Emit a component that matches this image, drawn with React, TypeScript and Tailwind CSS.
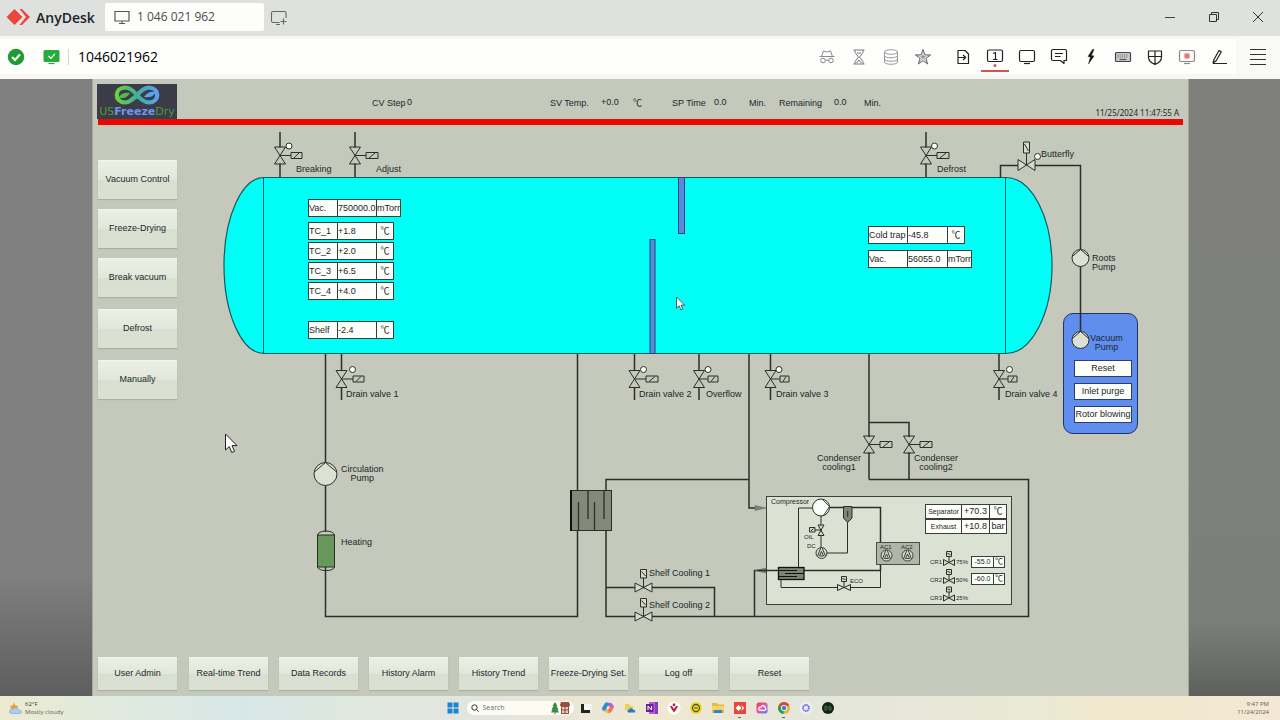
import type { ReactNode } from 'react';

/* The process canvas uses plant coordinates; its top-left corner is ORIGIN. */
const ORIGIN = { x: 200, y: 125 };

const LINE = '#2b2f28';

function Node({ x, y, children }: { x: number; y: number; children: ReactNode }) {
  return (
    <div className="absolute whitespace-nowrap" style={{ left: x - ORIGIN.x, top: y - ORIGIN.y }}>
      {children}
    </div>
  );
}

/* ---------- window chrome ---------- */

function TitleBar() {
  return (
    <header className="flex h-9 shrink-0 items-center bg-[#dfe1de] pb-0.5 pl-1.5 text-[#4a4c4b]">
      <svg className="h-6 w-6" viewBox="0 0 24 24" aria-hidden="true">
        <path d="M8.500 4L16.500 12L8.500 20L0.500 12Z" fill="#e8473c" />
        <path d="M13.500 4L16 4L24 12L16 20L13.500 20L20 12Z" fill="#e8473c" />
      </svg>
      <span className="ml-1.5 w-[63px] text-[14px] font-semibold text-[#1b2429]">AnyDesk</span>
      <button className="ml-1.5 flex h-7 w-[159px] items-center gap-1.5 rounded-xs bg-[#fdfefc] pl-2 text-[12px]">
        <svg className="h-4 w-[18px]" viewBox="0 0 18 16" fill="none" stroke="#555" strokeWidth="1.2" aria-hidden="true">
          <path d="M2 2.500H16V12H2ZM9 12V14.500M6 14.500H12" />
        </svg>
        1 046 021 962
      </button>
      <button className="mt-0.5 ml-1.5" aria-label="New session">
        <svg className="h-[18px] w-[18px]" viewBox="0 0 18 18" fill="none" stroke="#666" strokeWidth="1.1" aria-hidden="true">
          <path d="M9.500 13.500H3C2 13.500 1.500 13 1.500 12V4C1.500 3 2 2.500 3 2.500H14.500C15.500 2.500 16 3 16 4V9M6 15.500H10M13.500 9.500V15.500M10.500 12.500H16.500" />
        </svg>
      </button>
      <div className="ml-auto flex h-full">
        <button className="flex w-11 items-center justify-center" aria-label="Minimize">
          <svg className="h-3 w-3" viewBox="0 0 12 12" stroke="#444" aria-hidden="true"><path d="M1 6.500H11" /></svg>
        </button>
        <button className="flex w-11 items-center justify-center" aria-label="Restore">
          <svg className="h-3 w-3" viewBox="0 0 12 12" fill="none" stroke="#333" aria-hidden="true">
            <path d="M1.500 3.500H8.500V10.500H1.500ZM3.500 3.500V1.500H10.500V8.500H8.500" />
          </svg>
        </button>
        <button className="flex w-11 items-center justify-center" aria-label="Close">
          <svg className="h-3 w-3" viewBox="0 0 12 12" stroke="#333" aria-hidden="true"><path d="M1 1L11 11M11 1L1 11" /></svg>
        </button>
      </div>
    </header>
  );
}

function Tool({ label, active, children }: { label: string; active?: boolean; children: ReactNode }) {
  return (
    <button
      className={
        active
          ? 'relative flex h-full w-8 items-center justify-center after:absolute after:bottom-0.5 after:h-0.5 after:w-7 after:bg-[#d9534c]'
          : 'flex h-full w-8 items-center justify-center'
      }
      aria-label={label}
    >
      <svg
        className="h-[18px] w-[18px]"
        viewBox="0 0 18 18"
        fill="none"
        stroke="#222"
        strokeWidth="1.2"
        strokeLinejoin="round"
        overflow="visible"
        aria-hidden="true"
      >
        {children}
      </svg>
    </button>
  );
}

function Toolbar() {
  return (
    <nav className="flex h-[43px] shrink-0 items-center border-t-[3px] border-b-[5px] border-[#f7f8f5] bg-[#fefefd] text-black">
      <div className="flex w-[31px] justify-center">
        <svg className="h-[18px] w-[18px]" viewBox="0 0 18 18" aria-hidden="true">
          <circle cx="9" cy="9" r="8.200" fill="#1e9b35" />
          <path d="M5 9L8 12L13 6.500" fill="none" stroke="#fff" strokeWidth="2.200" />
        </svg>
      </div>
      <svg className="ml-3 h-4 w-[17px]" viewBox="0 0 17 16" aria-hidden="true">
        <rect x="0.500" y="1" width="16" height="12" rx="1.500" fill="#27ab3a" />
        <path d="M5.500 14.500H11.500" stroke="#27ab3a" strokeWidth="1.200" />
        <path d="M5.500 7L7.800 9.300L12 4.800" fill="none" stroke="#fff" strokeWidth="1.200" />
      </svg>
      <span className="ml-2 h-4 w-px bg-[#d3d3d3]" />
      <span className="ml-[9px] text-[14px]">1046021962</span>

      <div className="ml-auto flex h-full gap-2">
        <div className="flex h-full">
          <Tool label="Incognito">
            <g stroke="#888" strokeWidth="1">
              <path d="M1.500 8.500H16.500M3.500 8.500L5.500 3L9 4L12.500 3L14.500 8.500M7.500 12.500Q9 11.500 10.500 12.500" />
              <circle cx="5" cy="12.500" r="2.300" />
              <circle cx="13" cy="12.500" r="2.300" />
            </g>
          </Tool>
          <Tool label="Session time">
            <path stroke="#777" strokeWidth="1" d="M3.500 2H14.500M3.500 16H14.500M5 2V4.500L8.500 9L5 13.500V16M13 2V4.500L9.500 9L13 13.500V16M6.500 15L9 12L11.500 15M7 5H11" />
          </Tool>
          <Tool label="Storage">
            <g stroke="#999" strokeWidth="1">
              <ellipse cx="9" cy="4" rx="6.500" ry="2.300" />
              <path d="M2.500 4V14C2.500 17 15.500 17 15.500 14V4M2.500 7.500C2.500 10.500 15.500 10.500 15.500 7.500M2.500 11C2.500 14 15.500 14 15.500 11" />
            </g>
          </Tool>
          <Tool label="Favorite">
            <path stroke="#555" strokeWidth="0.900" d="M9 1.500L10.900 6.800L16.500 7L12 10.400L13.700 16L9 12.700L4.300 16L6 10.400L1.500 7L7.100 6.800Z" />
            <path stroke="#777" strokeWidth="0.600" d="M9 1.500V12.700M9 9L16.500 7M9 9L13.700 16M9 9L4.300 16M9 9L1.500 7M7.100 6.800L12 10.400M10.900 6.800L6 10.400" />
          </Tool>
        </div>
        <div className="mr-px flex h-full">
          <Tool label="File transfer">
            <path d="M4 2.500H11L14.500 6V15.500H4ZM4.500 9.500H11.500M9 7L11.700 9.500L9 12" />
          </Tool>
          <Tool label="Monitor 1" active>
            <rect x="1.500" y="2" width="15" height="11.500" rx="1.500" />
            <path d="M7 5.500L9.500 4.500V11.500M7 11.500H11.500" />
            <circle cx="9" cy="17.500" r="0.900" fill="#d9534c" stroke="#d9534c" />
          </Tool>
          <Tool label="Display">
            <rect x="1.500" y="2.500" width="15" height="11" rx="1.500" />
            <path d="M6 15.500H12" />
          </Tool>
          <Tool label="Chat">
            <path d="M3 1.500H15Q16.500 1.500 16.500 3V12.500H14V15.500L10.500 12.500H3Q1.500 12.500 1.500 11V3Q1.500 1.500 3 1.500ZM5 5.500H13M5 8.500H10.500" />
          </Tool>
          <Tool label="Actions">
            <path d="M10.500 1.500L6 8.500L8.500 9L6.500 16L12 8L9.300 7.500L12 1.500Z" fill="#111" strokeWidth="0.500" />
          </Tool>
          <Tool label="Keyboard">
            <rect x="1.500" y="4.500" width="15" height="9" rx="1" fill="#ccc" stroke="#444" />
            <path d="M3.500 7H14.500M3.500 9H14.500" stroke="#555" strokeWidth="1" strokeDasharray="1 1.200" />
            <path d="M5.500 11.500H12.500" stroke="#555" />
          </Tool>
          <Tool label="Permissions">
            <path d="M2.500 3H15.500V9Q15.500 14 9 16.500Q2.500 14 2.500 9ZM9 3V16M2.500 8.500H15.500" />
          </Tool>
          <Tool label="Record session">
            <rect x="1.500" y="2.500" width="15" height="11" rx="1.500" stroke="#888" />
            <path d="M6 15.500H12" stroke="#888" />
            <circle cx="9" cy="8" r="2.700" fill="#e8706c" stroke="#f0a8a4" />
          </Tool>
          <Tool label="Whiteboard">
            <path d="M3 15L4 11.500L9 2.500L11.300 3.800L6.200 12.800ZM3 15.500H17" />
          </Tool>
        </div>
      </div>
      <button className="flex h-full w-11 items-center justify-center bg-[#f9f9f7]" aria-label="Menu">
        <svg className="h-[18px] w-4" viewBox="0 0 16 18" stroke="#333" strokeWidth="1.200" aria-hidden="true">
          <path d="M0 1.500H16M0 6.500H16M0 11.500H16M0 16.500H16" />
        </svg>
      </button>
    </nav>
  );
}

/* ---------- operator screen ---------- */

function Logo() {
  return (
    <div className="flex h-[35px] w-20 flex-col items-center bg-[#3b3c48]">
      <svg className="h-[22px] w-12" viewBox="0 0 48 22" fill="none" aria-hidden="true">
        <defs>
          <linearGradient id="loop" x1="0" x2="1">
            <stop offset="0" stopColor="#6fd03a" />
            <stop offset="0.500" stopColor="#3fae9c" />
            <stop offset="1" stopColor="#5aa2f2" />
          </linearGradient>
        </defs>
        <path
          d="M24 11C19 5 16 3.500 12 3.500C1 4 1 18 12 18.500C22 18.500 26 3.500 36 3.500C47 4 47 18 36 18.500C32 18.500 29 17 24 11Z"
          stroke="url(#loop)"
          strokeWidth="4.200"
        />
        <path d="M5 14C8 9 12 8 17 9C14 14 9 15 5 14Z" fill="#55b94a" />
        <path d="M43 8C40 13 36 14 31 13C34 8 39 7 43 8Z" fill="#5aa2f2" />
      </svg>
      <span className="font-['DejaVu_Sans',sans-serif] text-[11px] leading-[12px] text-[#4f9a35]">
        US<b className="text-[#6f96ee]">Freeze</b>Dry
      </span>
    </div>
  );
}

function StatusHeader() {
  return (
    <div className="flex h-10 items-end pl-1">
      <Logo />
      <div className="ml-[195px] grid grid-cols-[35px_143px_51px_32px_39px_42px_35px_30px_55px_30px_auto] self-center pt-[7px] leading-[10px] whitespace-nowrap">
        <span>CV Step</span>
        <output className="-mt-px">0</output>
        <span>SV Temp.</span>
        <output className="-mt-px">+0.0</output>
        <span>℃</span>
        <span>SP Time</span>
        <output className="-mt-px">0.0</output>
        <span>Min.</span>
        <span>Remaining</span>
        <output className="-mt-px">0.0</output>
        <span>Min.</span>
      </div>
      <time className="mr-[9px] ml-auto pb-px font-['Noto_Sans',sans-serif] text-[8px] leading-[11px]">11/25/2024 11:47:55 A</time>
    </div>
  );
}

function PanelButton({ children, tall }: { children: ReactNode; tall?: boolean }) {
  return (
    <button
      className={
        (tall ? 'h-[39px]' : 'h-[33px]') +
        ' w-[79px] shrink-0 border-t border-[#f2f5ee] bg-linear-[180deg,#ebefe5_0%,#e2e7db_49%,#d9dfd1_51%,#dbe1d2_100%] text-center shadow-[0_1px_1px_#a9afa2]'
      }
    >
      {children}
    </button>
  );
}

/* Two-way valve on a vertical pipe, actuator to the right. */
function Valve({ x, y, top, bottom, box, dot }: { x: number; y: number; top: number; bottom: number; box: [number, number]; dot?: number }) {
  return (
    <g fill="none" stroke={LINE} strokeWidth="1">
      <path d={`M${x} ${top}V${y - 8}M${x} ${y + 8}V${bottom}`} strokeWidth="1.500" />
      <path d={`M${x - 5.5} ${y - 8.5}H${x + 5.5}L${x - 5.5} ${y + 8.5}H${x + 5.5}ZM${x} ${y}H${box[0]}`} />
      <path d={`M${box[0]} ${y - 3}H${box[1]}V${y + 3}H${box[0]}ZM${box[0] + 3} ${y + 2.5}L${box[1] - 3} ${y - 2.5}`} />
      {dot !== undefined && <circle cx={dot} cy={y - 9.5} r="3" fill="#fdfdfb" />}
    </g>
  );
}

/* Two-way valve on a horizontal pipe, actuator above. */
function FlatValve({ x, y, w, h, stem, box }: { x: number; y: number; w: number; h: number; stem: number; box: [number, number] }) {
  return (
    <g fill="#d5dacb" stroke={LINE} strokeWidth="1">
      <path d={`M${x - w} ${y - h}V${y + h}L${x + w} ${y - h}V${y + h}Z`} />
      <path d={`M${x} ${y}V${y - stem}`} />
      <path d={`M${x - box[0]} ${y - stem}H${x + box[0]}V${y - stem - box[1]}H${x - box[0]}ZM${x - box[0] + 1} ${y - stem - box[1] + 2}L${x + box[0] - 1} ${y - stem - 2}`} />
    </g>
  );
}

function Pump({ x, y, r }: { x: number; y: number; r: number }) {
  const k = r * 0.94;
  return (
    <g stroke={LINE} strokeWidth="1" fill="#dce1d3">
      <circle cx={x} cy={y} r={r} />
      <path d={`M${x - k} ${y - r * 0.2}L${x} ${y - r}L${x + k} ${y - r * 0.2}`} fill="none" />
    </g>
  );
}

function Fan({ x, y }: { x: number; y: number }) {
  return (
    <g fill="none" stroke={LINE} strokeWidth="0.900">
      <circle cx={x} cy={y} r="5.500" fill="#d5dacb" />
      <path d={`M${x - 4} ${y + 3.5}L${x - 0.8} ${y - 5}M${x + 4} ${y + 3.5}L${x + 0.8} ${y - 5}M${x - 2} ${y + 3}L${x} ${y - 1.5}L${x + 2} ${y + 3}Z`} />
    </g>
  );
}

function Pointer({ x, y, s }: { x: number; y: number; s: number }) {
  return (
    <path
      transform={`translate(${x} ${y}) scale(${s})`}
      d="M0 0V16L3.800 12.600L6.300 18.500L9 17.300L6.500 11.600H11.500Z"
      fill="#fff"
      stroke="#222"
      strokeWidth="1"
    />
  );
}

function Drawing() {
  return (
    <svg
      className="pointer-events-none absolute top-0 left-0 h-[525px] w-[980px] overflow-visible"
      viewBox="200 125 980 525"
      fill="none"
      aria-hidden="true"
    >
      {/* vessel */}
      <path d="M264 177.500H1006A46 88 0 0 1 1006 353.500H264A40 88 0 0 1 264 177.500Z" fill="#00fff6" stroke="#12595c" strokeWidth="1.200" />
      <path d="M263.500 178V353M1005.500 178V353" stroke="#0d5a5c" />
      <rect x="678.500" y="177.500" width="6" height="56" fill="#5a8ade" stroke="#22457c" />
      <rect x="650" y="239.500" width="5" height="114" fill="#5a8ade" stroke="#22457c" />

      {/* pipes */}
      <g stroke={LINE} strokeWidth="1.500">
        <path d="M325.500 354V463M325.500 485V532M325.500 567V616.500H577.500V530M577.500 354V491" />
        <path d="M606 491V479.500H749M749 354V508H757M606 530V616.500H1028.500V479.500H869M606 587.500H714.500V616.500M754.500 616.500V570.500H757" />
        <path d="M869 354V437M869 422.500H909V437M869 453V479.500M909 453V479.500" />
        <path d="M1000.500 178V165.500H1019M1034 165.500H1080.500V332" />
      </g>
      <path d="M755 505.500L766 508L755 510.500ZM766 568L755 570.500L766 573Z" fill="#7d8377" stroke="#656a60" strokeWidth="0.500" />

      <Valve x={280} y={155.500} top={132} bottom={177} box={[291, 302]} dot={289} />
      <Valve x={355} y={155.500} top={132} bottom={177} box={[366, 378]} />
      <Valve x={926} y={155.500} top={132} bottom={177} box={[937, 949]} dot={934.500} />
      <Valve x={341.500} y={379} top={354} bottom={400} box={[353, 364]} dot={352.500} />
      <Valve x={634.500} y={379} top={354} bottom={400} box={[646, 658]} dot={643.500} />
      <Valve x={699} y={379} top={354} bottom={400} box={[708, 718]} dot={708} />
      <Valve x={770.500} y={379} top={354} bottom={400} box={[780, 789]} dot={779} />
      <Valve x={999} y={379} top={354} bottom={400} box={[1008, 1017]} dot={1009.500} />
      <Valve x={869} y={444.500} top={436} bottom={454} box={[880, 892]} />
      <Valve x={909} y={444.500} top={436} bottom={454} box={[920, 932]} />
      <FlatValve x={1026.500} y={165} w={8.500} h={5.500} stem={12} box={[3, 11]} />
      <circle cx="1037.500" cy="156.500" r="3" fill="#fdfdfb" stroke={LINE} />
      <FlatValve x={643.500} y={587.500} w={8.500} h={4.500} stem={9.500} box={[3, 8.500]} />
      <FlatValve x={643.500} y={616.500} w={8.500} h={4.500} stem={9.500} box={[3, 8.500]} />

      <Pump x={325.500} y={474} r={11.500} />
      <Pump x={1080.500} y={258} r={8.500} />
      <Pump x={1080.500} y={340} r={8.500} />

      {/* heater */}
      <path d="M317.500 535.500C317.500 529.500 334.500 529.500 334.500 535.500M317.500 566.500C317.500 572 334.500 572 334.500 566.500" stroke={LINE} />
      <rect x="317.500" y="535" width="17" height="32" fill="#68985e" stroke={LINE} />

      {/* plate exchanger */}
      <rect x="570.500" y="490.500" width="41" height="40" fill="#838a7a" stroke={LINE} />
      <path d="M571 490V531" stroke="#111" strokeWidth="2" />
      <path d="M578.500 502V530M588 491V519M594.500 502V530M604 491V519" stroke="#2c302a" strokeWidth="1.300" />

      {/* compressor skid */}
      <rect x="766.500" y="496.500" width="245" height="108" fill="#dce2d3" stroke="#3d423a" />
      <g stroke={LINE} strokeWidth="1">
        <path d="M813 508H798.500V568M821 516V548M847.500 522V553H827M781 580V587.500H838M850 587.500H880.500V565" />
        <path d="M829 507.500H880.500V543M757 570.500H880.500V565" strokeWidth="1.500" />
      </g>
      <circle cx="821" cy="507.500" r="8.500" fill="#fdfefb" stroke={LINE} />
      <path d="M823 500L829.500 506.500L823.500 515.500" stroke={LINE} strokeWidth="0.900" />
      <path d="M843.500 506.500H852V518L847.700 522.500L843.500 518Z" fill="#7f8578" stroke={LINE} />
      <path d="M847.700 511V517" stroke={LINE} />
      <path d="M818 525H824L818 535.500H824ZM821 530H815M809.500 527.500H815V532H809.500ZM811 531L813.500 528.500" stroke={LINE} fill="#d5dacb" />
      <Fan x={821.500} y={553} />
      <rect x="876.500" y="542.500" width="43" height="22" fill="#b0b5a9" stroke="#4a4f46" />
      <Fan x={886.500} y={555.500} />
      <Fan x={907.500} y={555.500} />
      <rect x="778.500" y="567.500" width="25.500" height="12" fill="#7e8576" stroke="#111" strokeWidth="1.300" />
      <path d="M779 570.500H797M785 573.500H804M779 576.500H797" stroke="#111" />
      <FlatValve x={844} y={587.500} w={6.500} h={3} stem={6} box={[2.500, 5]} />
      <FlatValve x={949} y={562.500} w={5.500} h={3} stem={6} box={[2.500, 5]} />
      <FlatValve x={949} y={580.500} w={5.500} h={3} stem={6} box={[2.500, 5]} />
      <FlatValve x={949} y={598} w={5.500} h={3} stem={6} box={[2.500, 5]} />
    </svg>
  );
}

type Mark = { x: number; y: number; text: string };

const labels: Mark[] = [
  { x: 296, y: 169, text: 'Breaking' },
  { x: 376, y: 169, text: 'Adjust' },
  { x: 937, y: 169, text: 'Defrost' },
  { x: 1041, y: 154, text: 'Butterfly' },
  { x: 346, y: 394, text: 'Drain valve 1' },
  { x: 639, y: 394, text: 'Drain valve 2' },
  { x: 706, y: 394, text: 'Overflow' },
  { x: 776, y: 394, text: 'Drain valve 3' },
  { x: 1005, y: 394, text: 'Drain valve 4' },
  { x: 341, y: 469, text: 'Circulation\nPump' },
  { x: 341, y: 542, text: 'Heating' },
  { x: 649, y: 573, text: 'Shelf Cooling 1' },
  { x: 649, y: 605, text: 'Shelf Cooling 2' },
  { x: 817, y: 458, text: 'Condenser\ncooling1' },
  { x: 914, y: 458, text: 'Condenser\ncooling2' },
  { x: 1092, y: 258, text: 'Roots\nPump' },
];

const smallLabels: Mark[] = [
  { x: 771, y: 502, text: 'Compressor' },
];

const tinyLabels: Mark[] = [
  { x: 804, y: 537, text: 'OIL' },
  { x: 807, y: 546, text: 'DC' },
  { x: 880, y: 547, text: 'AC1' },
  { x: 901, y: 547, text: 'AC2' },
  { x: 850, y: 581, text: 'ECO' },
  { x: 930, y: 562, text: 'CR1' },
  { x: 930, y: 580, text: 'CR2' },
  { x: 930, y: 598, text: 'CR3' },
  { x: 956, y: 562, text: '75%' },
  { x: 956, y: 580, text: '50%' },
  { x: 956, y: 598, text: '25%' },
];

function Reading({ name, value, unit, wide, far }: { name: string; value: string; unit: string; wide?: boolean; far?: boolean }) {
  return (
    <div className="flex h-[18px] w-max divide-x divide-[#25403f] border border-[#25403f] bg-[#fdfefa] leading-4">
      <span className={far ? 'w-[39px]' : 'w-[29px]'}>{name}</span>
      <output className={far ? 'w-10' : 'w-[39px]'}>{value}</output>
      <span className={wide ? 'w-[23px]' : 'w-4 text-center'}>{unit}</span>
    </div>
  );
}

function SkidReading({ name, value, unit }: { name: string; value: string; unit: string }) {
  return (
    <div className="flex h-[15px] divide-x divide-[#3a3d38] border border-[#3a3d38] bg-[#fdfefa] leading-[13px]">
      <span className="w-9 text-center text-[7px]">{name}</span>
      <output className="w-7 text-center">{value}</output>
      <span className="w-4 text-center">{unit}</span>
    </div>
  );
}

function SetPoint({ value }: { value: string }) {
  return (
    <div className="flex h-3 divide-x divide-[#3a3d38] border border-[#3a3d38] bg-[#fdfefa] leading-[10px]">
      <output className="w-[22px] text-center text-[7px]">{value}</output>
      <span className="w-2.5 text-center text-[8px]">℃</span>
    </div>
  );
}

function Process() {
  return (
    <div className="relative ml-[23px] min-w-[980px] flex-1">
      <Node x={1063} y={313}>
        <section className="flex h-[121px] w-[75px] flex-col items-start gap-1.5 rounded-[10px] border border-[#1d3566] bg-[#5f8eee] pt-5 pl-2.5">
          <h2 className="mb-0.5 w-full pl-0.5 text-center leading-[9px]">
            Vacuum
            <br />
            Pump
          </h2>
          <button className="h-[17px] w-[58px] border border-[#2e3f66] bg-[#fdfefa] leading-[15px]">Reset</button>
          <button className="h-[17px] w-[58px] border border-[#2e3f66] bg-[#fdfefa] leading-[15px]">Inlet purge</button>
          <button className="h-[17px] w-[58px] border border-[#2e3f66] bg-[#fdfefa] leading-[15px]">Rotor blowing</button>
        </section>
      </Node>

      <Drawing />

      {labels.map((l) => (
        <Node key={l.text} x={l.x} y={l.y - 4}>
          <p className="text-center leading-[9px] whitespace-pre">{l.text}</p>
        </Node>
      ))}
      {smallLabels.map((l) => (
        <Node key={l.text} x={l.x} y={l.y - 4}>
          <p className="text-[7px] leading-[8px]">{l.text}</p>
        </Node>
      ))}
      {tinyLabels.map((l) => (
        <Node key={l.text} x={l.x} y={l.y - 4}>
          <p className="text-[6px] leading-[8px]">{l.text}</p>
        </Node>
      ))}

      <Node x={308} y={199}>
        <Reading name="Vac." value="750000.0" unit="mTorr" wide />
      </Node>
      <Node x={308} y={222}>
        <div className="flex flex-col gap-0.5">
          <Reading name="TC_1" value="+1.8" unit="℃" />
          <Reading name="TC_2" value="+2.0" unit="℃" />
          <Reading name="TC_3" value="+6.5" unit="℃" />
          <Reading name="TC_4" value="+4.0" unit="℃" />
        </div>
      </Node>
      <Node x={308} y={321}>
        <Reading name="Shelf" value="-2.4" unit="℃" />
      </Node>
      <Node x={868} y={226}>
        <div className="flex flex-col gap-1.5">
          <Reading far name="Cold trap" value="-45.8" unit="℃" />
          <Reading far name="Vac." value="56055.0" unit="mTorr" wide />
        </div>
      </Node>
      <Node x={925} y={504}>
        <div className="flex flex-col">
          <SkidReading name="Separator" value="+70.3" unit="℃" />
          <SkidReading name="Exhaust" value="+10.8" unit="bar" />
        </div>
      </Node>
      <Node x={971} y={556}>
        <div className="flex flex-col gap-[5px]">
          <SetPoint value="-55.0" />
          <SetPoint value="-60.0" />
        </div>
      </Node>

      <svg
        className="pointer-events-none absolute top-0 left-0 h-[525px] w-[980px]"
        viewBox="200 125 980 525"
        aria-hidden="true"
      >
        <Pointer x={225.500} y={434} s={1} />
        <Pointer x={676.500} y={297} s={0.700} />
      </svg>
    </div>
  );
}

function OperatorScreen() {
  return (
    <main className="flex min-w-0 flex-1 flex-col border-x border-[#a3a89b] bg-[#c4c9bb] font-['Liberation_Sans','Noto_Sans_CJK_SC',sans-serif] text-[9px] text-[#22262a]">
      <StatusHeader />
      <div className="mr-[5px] ml-[5px] h-1.5 shrink-0 border-t border-[#c41a10] bg-[#f00500]" />
      <div className="flex flex-1 pl-[5px]">
        <nav className="flex flex-col gap-3 pt-[35px]">
          <div className="flex flex-col gap-2.5">
            <PanelButton tall>Vacuum Control</PanelButton>
            <PanelButton tall>Freeze-Drying</PanelButton>
            <PanelButton tall>Break vacuum</PanelButton>
          </div>
          <PanelButton tall>Defrost</PanelButton>
          <PanelButton tall>Manually</PanelButton>
        </nav>
        <Process />
      </div>
      <footer className="flex gap-3 pb-1.5 pl-[5px]">
        <PanelButton>User Admin</PanelButton>
        <div className="flex gap-[11px]">
          <PanelButton>Real-time Trend</PanelButton>
          <PanelButton>Data Records</PanelButton>
          <PanelButton>History Alarm</PanelButton>
          <PanelButton>History Trend</PanelButton>
          <PanelButton>Freeze-Drying Set.</PanelButton>
          <PanelButton>Log off</PanelButton>
        </div>
        <PanelButton>Reset</PanelButton>
      </footer>
    </main>
  );
}

/* ---------- taskbar ---------- */

function App16({ label, running, children }: { label: string; running?: boolean; children: ReactNode }) {
  return (
    <button className="relative flex w-[22px] items-center justify-center" aria-label={label}>
      <svg className="h-3.5 w-3.5" viewBox="0 0 14 14" aria-hidden="true">
        {children}
      </svg>
      {running && <span className="absolute bottom-0.5 h-px w-[3px] bg-[#666]" />}
    </button>
  );
}

function Taskbar() {
  return (
    <footer className="grid h-6 shrink-0 grid-cols-[1fr_auto_1fr] bg-linear-[90deg,#edebcf_0%,#e1eadd_8%,#d7e7e8_19%,#e0e8dd_28%,#e3e5df_38%,#f0e8d0_52%,#e4e6dc_62%,#e9e9d6_80%,#f0e8cd_86%,#f4e8d4_100%]">
      <div className="flex items-center gap-[3px] pl-[9px] text-[6px] leading-[8px] text-[#5c6055]">
        <svg className="h-[13px] w-[13px]" viewBox="0 0 13 13" aria-hidden="true">
          <path d="M5 0L6 3L9 4L8 7H2L1 4L4 3Z" fill="#e8a33c" />
          <path d="M3 11.500Q0 11.500 0.500 9Q1 7 3.500 7.500Q5 5 8 6Q9.500 7 9.500 8Q12.500 8 12.500 10Q12.500 11.500 10.500 11.500Z" fill="#a9cdf3" stroke="#6f9fd8" strokeWidth="0.600" />
        </svg>
        <p>
          <span className="text-[#33362f]">62°F</span>
          <br />
          Mostly cloudy
        </p>
      </div>

      <div className="flex">
        <App16 label="Start">
          <path d="M1.500 1.500H6.500V6.500H1.500ZM7.500 1.500H12.500V6.500H7.500ZM1.500 7.500H6.500V12.500H1.500ZM7.500 7.500H12.500V12.500H7.500Z" fill="#1b83cf" />
        </App16>
        <label className="mr-px ml-[3px] flex h-3.5 w-[107px] items-center self-center rounded-full bg-[#fcfcf5] pl-1">
          <svg className="h-2 w-2 shrink-0" viewBox="0 0 8 8" fill="none" stroke="#333" aria-hidden="true">
            <circle cx="3.500" cy="3.500" r="2.700" />
            <path d="M5.500 5.500L7.700 7.700" />
          </svg>
          <input
            className="ml-1 w-16 bg-transparent text-[7px] outline-none placeholder:text-[#6b6b66]"
            placeholder="Search"
            aria-label="Search"
          />
          <svg className="ml-1 h-3 w-[19px] shrink-0" viewBox="0 0 19 12" aria-hidden="true">
            <path d="M4 0L6.500 4H5.500L7.500 7.500H6.500L8 10.500H0L1.500 7.500H0.500L2.500 4H1.500Z" fill="#3b8a45" />
            <path d="M3.500 10.500H4.500V12H3.500Z" fill="#6b4a2c" />
            <path d="M9 3L10 0H18L19 3V4H18V12H10V4H9Z" fill="#94513f" />
            <path d="M11 5H13.500V7.500H11ZM14.500 5H17V7.500H14.500ZM11 8.500H13.500V11H11ZM14.500 8.500H17V11H14.500Z" fill="#e8c9b3" />
          </svg>
        </label>
        <App16 label="Task view">
          <path d="M5 3H13V9H5Z" fill="#f5f5f2" />
          <path d="M2 3H5V9H11V12H2Z" fill="#222" />
        </App16>
        <App16 label="Copilot">
          <path d="M4 2Q8 0 9 4L6 10Q1 11 1 7Z" fill="#2f8be0" />
          <path d="M8 2Q11 1 13 6L11 9L7 6Z" fill="#c05bd0" />
          <path d="M6 8L10 5Q14 8 9 12Q6 13 5 10Z" fill="#ee7550" />
          <path d="M3 9L7 8L8 12Q4 12 3 9Z" fill="#e8bd3e" />
          <path d="M6 5.500L8.500 5L8 8L5.500 8.500Z" fill="#f4efe0" />
        </App16>
        <App16 label="OneDrive">
          <path d="M2 3H6L7 5H10V9H2Z" fill="#f0cd57" />
          <path d="M5 11.500Q3.500 9.500 6 8.500Q8 5.500 10 8.500Q13 9 12 11.500Z" fill="#1c7fd1" />
        </App16>
        <App16 label="OneNote">
          <rect x="4" y="1" width="9" height="12" fill="#b360d8" />
          <path d="M10 1H13V13H10Z" fill="#8d3cb5" />
          <rect x="1" y="3" width="7.500" height="8" fill="#6a2195" />
          <path d="M3 9V5L6.500 9V5" fill="none" stroke="#fff" />
        </App16>
        <App16 label="Remote tool">
          <circle cx="7" cy="7" r="6.500" fill="#fff" />
          <path d="M3 5L5 5L7 8L9 5L11 5L9.500 8L7 11.500L4.500 8ZM5.800 2.500H8.200V5H5.800Z" fill="#b91f3a" />
        </App16>
        <App16 label="Clock">
          <circle cx="7" cy="7" r="6" fill="#ecd92b" />
          <circle cx="7" cy="7" r="3.500" fill="none" stroke="#5c5520" strokeWidth="1.300" />
          <path d="M5 7H9" stroke="#5c5520" />
        </App16>
        <App16 label="Files">
          <path d="M1 2H6L7 3.500H13V12H1Z" fill="#e8b83b" />
          <path d="M1 5H13V9H1Z" fill="#f7d469" />
          <path d="M3 9H11V12H3Z" fill="#2b86cf" />
        </App16>
        <App16 label="AnyDesk" running>
          <rect x="1" y="1" width="12" height="12" fill="#e8463a" />
          <path d="M5.500 4L8.500 7L5.500 10L2.500 7ZM8 4L11.500 7L8 10L9.500 7Z" fill="#fff" />
        </App16>
        <App16 label="Creative Cloud">
          <defs>
            <linearGradient id="cc" x1="0" y1="0" x2="1" y2="1">
              <stop offset="0" stopColor="#ee3d3d" />
              <stop offset="0.500" stopColor="#e356b5" />
              <stop offset="1" stopColor="#4386ee" />
            </linearGradient>
          </defs>
          <rect x="1.500" y="1.500" width="11" height="11" rx="2.500" fill="url(#cc)" />
          <path d="M4 9Q3 6 6 6Q8 3 10 6Q12 9 9 9.500Z" fill="none" stroke="#fff" strokeWidth="1.300" />
        </App16>
        <App16 label="Chrome" running>
          <circle cx="7" cy="7" r="6" fill="#e0b93a" />
          <path d="M7 7L1.800 4A6 6 0 0 1 12.200 4Z" fill="#dc4437" />
          <path d="M7 7L1.800 4A6 6 0 0 0 6.500 13Z" fill="#2f9c52" />
          <circle cx="7" cy="7" r="3" fill="#fff" />
          <circle cx="7" cy="7" r="2.200" fill="#3c7fe0" />
        </App16>
        <App16 label="Settings">
          <circle cx="7" cy="7" r="6.500" fill="#eeeff5" />
          <circle cx="7" cy="7" r="3" fill="none" stroke="#6b6bdc" strokeWidth="1.800" strokeDasharray="1.500 0.500" />
        </App16>
        <App16 label="Monitor utility">
          <circle cx="7" cy="7" r="6" fill="#132216" />
          <path d="M4 5Q6 4 6 7Q6 10 4 9ZM8 5Q11 5 10 9H8Z" fill="none" stroke="#3b7a3b" />
        </App16>
      </div>

      <div className="flex flex-col justify-center pr-[11px] text-right text-[6px] leading-[8px] text-[#5c5b50]">
        <time>9:47 PM</time>
        <time>11/24/2024</time>
      </div>
    </footer>
  );
}

export default function App() {
  return (
    <div className="flex min-h-screen flex-col font-['Open_Sans','Noto_Sans',sans-serif]">
      <TitleBar />
      <Toolbar />
      <div className="flex flex-1">
        <aside className="w-[92px] shrink-0 bg-linear-[180deg,#808080_0%,#808080_80%,#5e5e5e_100%]" />
        <OperatorScreen />
        <aside className="w-[91px] shrink-0 bg-linear-[180deg,#7f807e_0%,#7c7f79_88%,#5e605c_100%]" />
      </div>
      <Taskbar />
    </div>
  );
}
